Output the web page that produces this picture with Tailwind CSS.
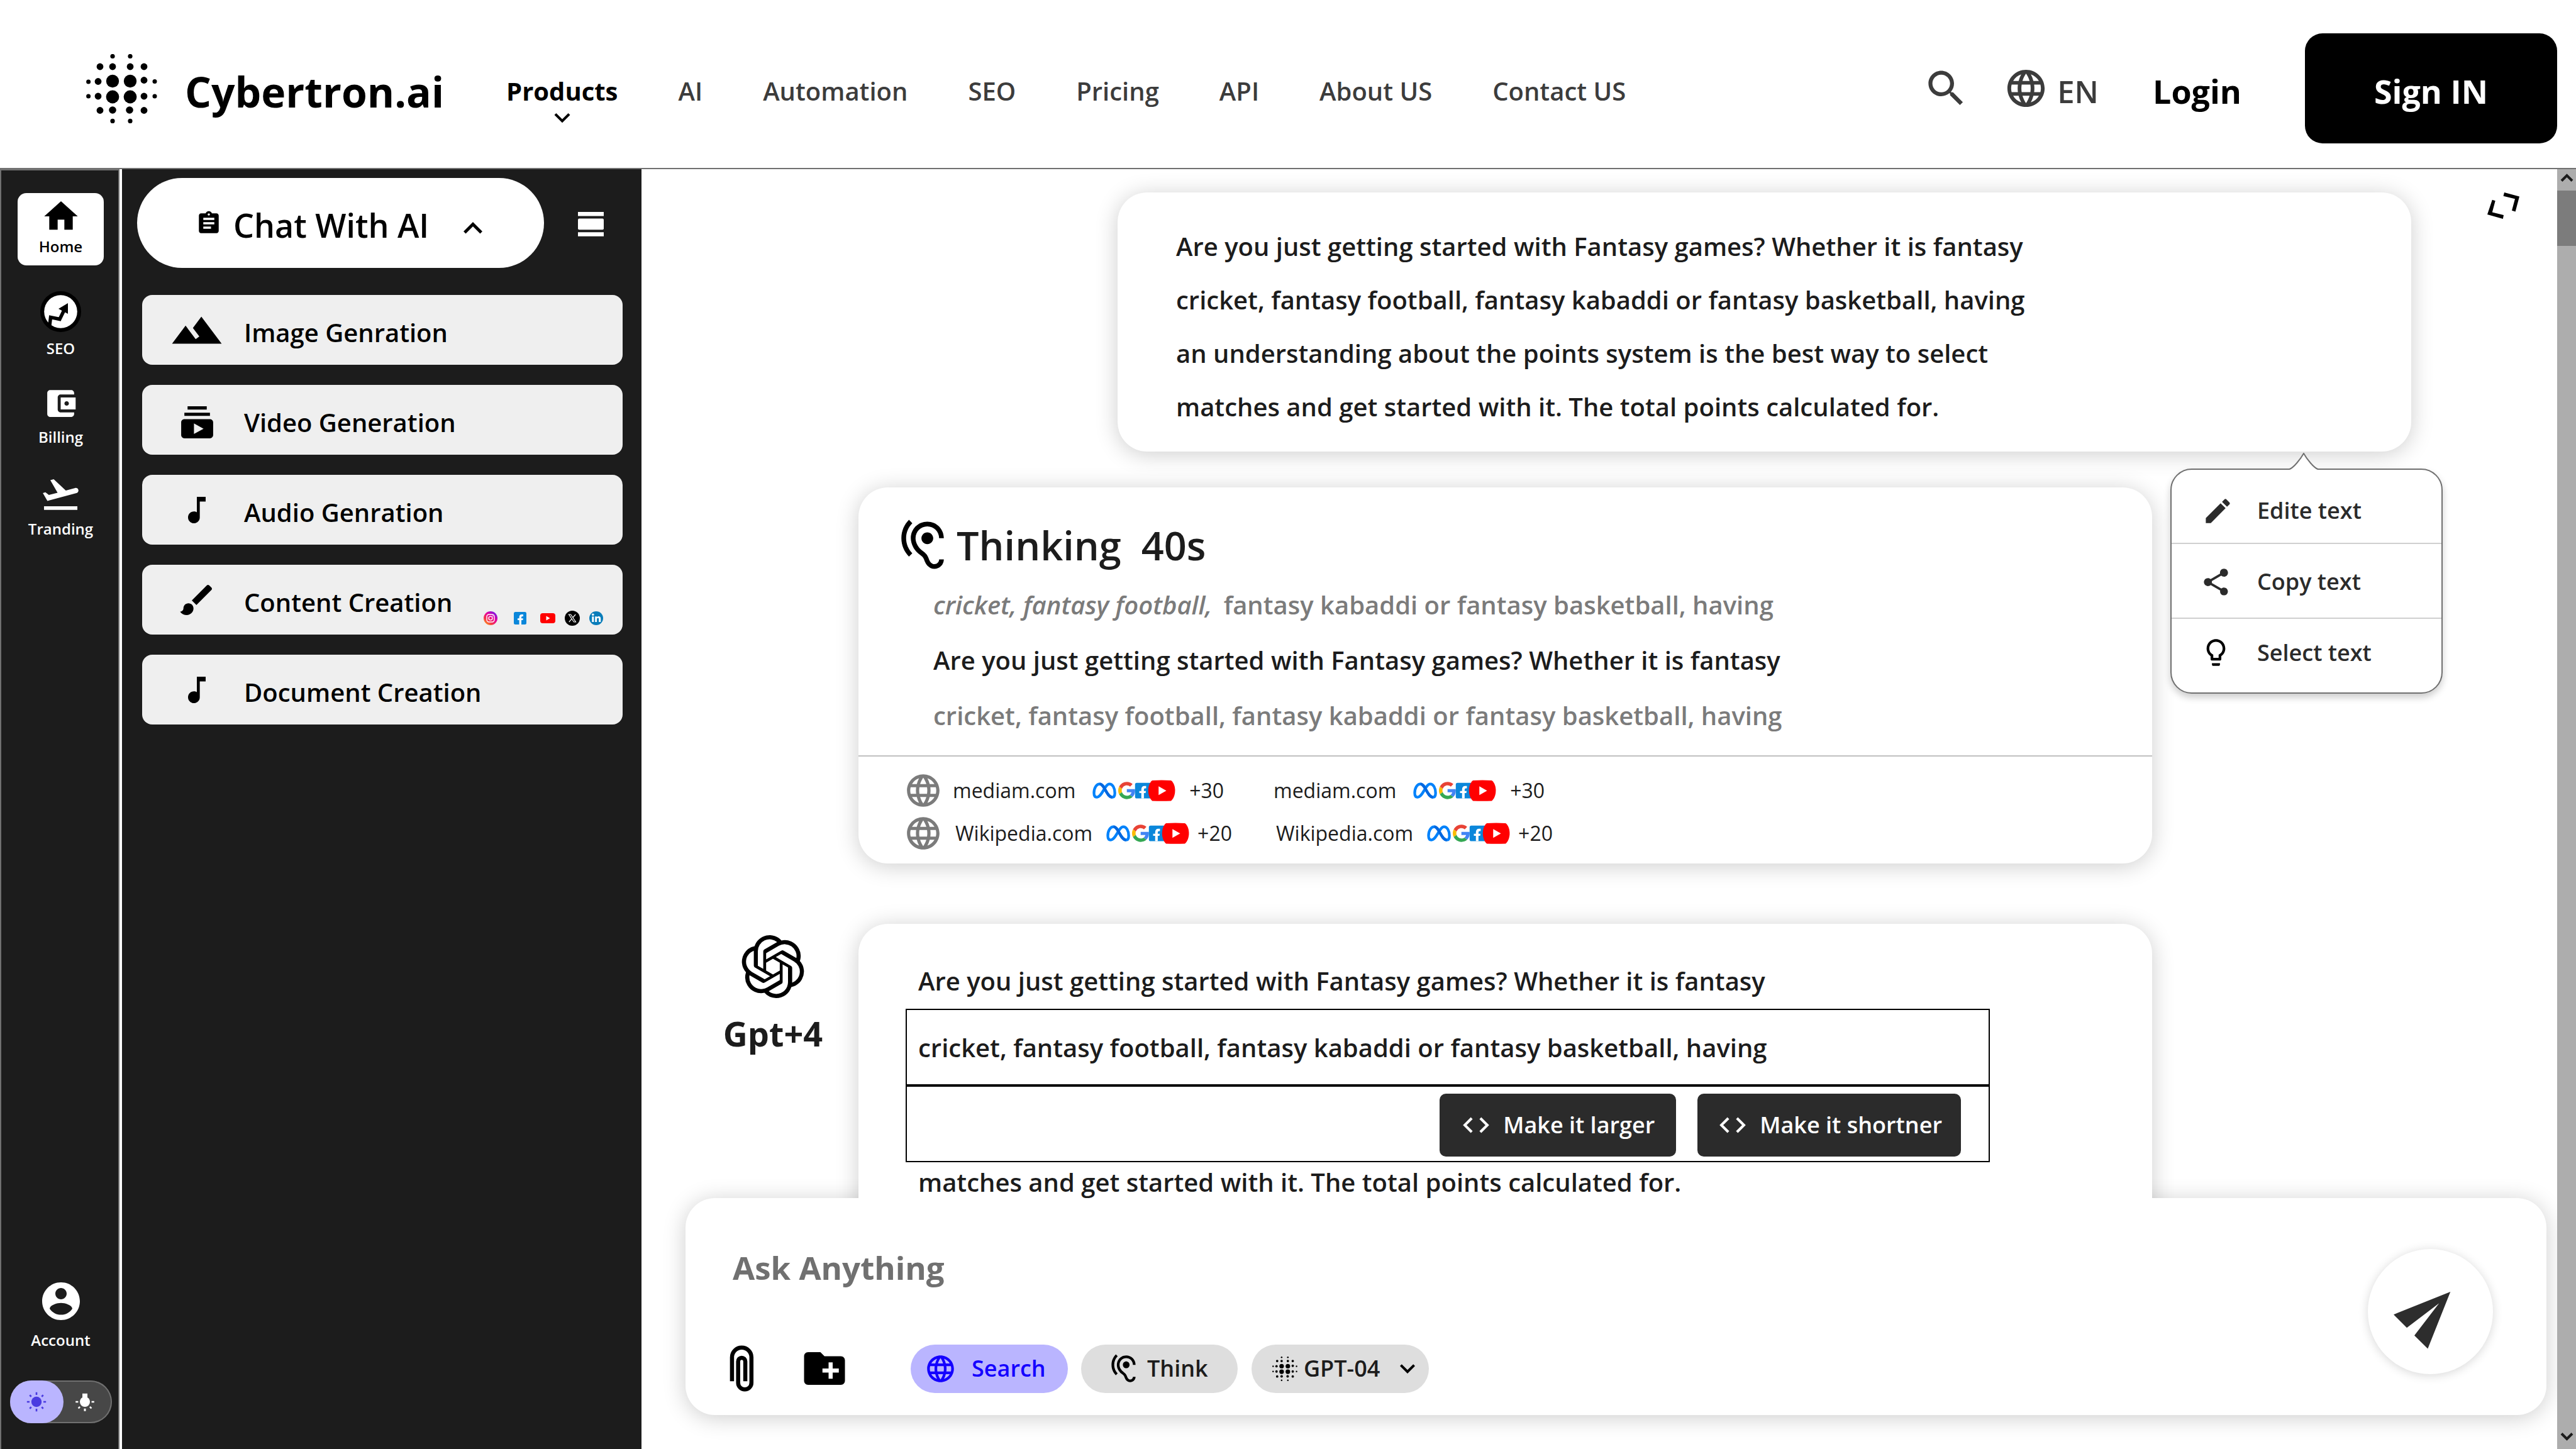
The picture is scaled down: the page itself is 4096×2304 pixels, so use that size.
<!DOCTYPE html>
<html lang="en">
<head>
<meta charset="utf-8">
<title>Cybertron.ai</title>
<script src="https://cdn.jsdelivr.net/npm/@tailwindcss/browser@4"></script>
</head>
<body class="flex h-screen flex-col overflow-hidden bg-white font-['Open_Sans','Segoe_UI',sans-serif] font-semibold text-[#1c1c1c]">

<!-- Shared icons -->
<svg class="hidden" aria-hidden="true">
  <symbol id="globe" viewBox="0 0 24 24"><path d="M11.99 2C6.47 2 2 6.48 2 12s4.47 10 9.99 10C17.52 22 22 17.52 22 12S17.52 2 11.99 2zm6.93 6h-2.95c-.32-1.25-.78-2.45-1.38-3.56 1.84.63 3.37 1.91 4.33 3.56zM12 4.04c.83 1.2 1.48 2.53 1.91 3.96h-3.82c.43-1.43 1.08-2.76 1.91-3.96zM4.26 14C4.1 13.36 4 12.69 4 12s.1-1.36.26-2h3.38c-.08.66-.14 1.32-.14 2 0 .68.06 1.34.14 2H4.26zm.82 2h2.95c.32 1.25.78 2.45 1.38 3.56-1.84-.63-3.37-1.9-4.33-3.56zm2.95-8H5.08c.96-1.66 2.49-2.93 4.33-3.56C8.81 5.55 8.35 6.75 8.03 8zM12 19.96c-.83-1.2-1.48-2.53-1.91-3.96h3.82c-.43 1.43-1.08 2.76-1.91 3.96zM14.34 14H9.66c-.09-.66-.16-1.32-.16-2 0-.68.07-1.35.16-2h4.68c.09.65.16 1.32.16 2 0 .68-.07 1.34-.16 2zm.25 5.56c.6-1.11 1.06-2.31 1.38-3.56h2.95c-.96 1.65-2.49 2.93-4.33 3.56zM16.36 14c.08-.66.14-1.32.14-2 0-.68-.06-1.34-.14-2h3.38c.16.64.26 1.31.26 2s-.1 1.36-.26 2h-3.38z"/></symbol>
  <symbol id="hearing" viewBox="0 0 24 24"><path d="M17 20c-.29 0-.56-.06-.76-.15-.71-.37-1.21-.88-1.71-2.38-.51-1.56-1.47-2.29-2.39-3-.79-.61-1.61-1.24-2.32-2.53C9.29 10.98 9 9.93 9 9c0-2.8 2.2-5 5-5s5 2.2 5 5h2c0-3.93-3.07-7-7-7S7 5.07 7 9c0 1.26.38 2.65 1.07 3.9.91 1.65 1.98 2.48 2.85 3.15.81.62 1.39 1.07 1.71 2.05.6 1.82 1.37 2.84 2.73 3.55.51.23 1.07.35 1.64.35 2.21 0 4-1.79 4-4h-2c0 1.1-.9 2-2 2zM7.64 2.64L6.22 1.22C4.23 3.21 3 5.96 3 9s1.23 5.79 3.22 7.78l1.41-1.41C6.01 13.74 5 11.49 5 9s1.01-4.74 2.64-6.36zM11.5 9c0 1.38 1.12 2.5 2.5 2.5s2.5-1.12 2.5-2.5-1.12-2.5-2.5-2.5-2.5 1.12-2.5 2.5z"/></symbol>
  <symbol id="note" viewBox="0 0 24 24"><path d="M12 3v10.55c-.59-.34-1.27-.55-2-.55-2.21 0-4 1.79-4 4s1.79 4 4 4 4-1.79 4-4V6.2h4V3h-6z"/></symbol>
  <symbol id="down" viewBox="0 0 24 24"><path d="M7.41 8.59 12 13.17l4.59-4.58L18 10l-6 6-6-6z"/></symbol>
  <symbol id="up" viewBox="0 0 24 24"><path d="M7.41 15.41 12 10.83l4.59 4.58L18 14l-6-6-6 6z"/></symbol>
  <symbol id="code" viewBox="0 0 24 24"><path d="M9.4 16.6 4.8 12l4.6-4.6L8 6l-6 6 6 6 1.4-1.4zm5.2 0 4.6-4.6-4.6-4.6L16 6l6 6-6 6-1.4-1.4z"/></symbol>
  <symbol id="dots" viewBox="0 0 113 110">
    <circle cx="42" cy="3.5" r="3.6"/><circle cx="70" cy="3.5" r="3.6"/>
    <circle cx="22" cy="20" r="5.4"/><circle cx="42" cy="20" r="5.4"/><circle cx="70" cy="20" r="5.4"/><circle cx="92" cy="20" r="5.4"/>
    <circle cx="3.6" cy="44" r="3.5"/><circle cx="19" cy="43.5" r="5.4"/><circle cx="42" cy="43" r="10.2"/><circle cx="70" cy="43" r="10.2"/><circle cx="92" cy="41.5" r="5.4"/><circle cx="109" cy="43.5" r="3.5"/>
    <circle cx="3.6" cy="67" r="3.5"/><circle cx="19" cy="67" r="5.4"/><circle cx="42" cy="68" r="10.4"/><circle cx="70" cy="68" r="10.4"/><circle cx="92" cy="67" r="5.4"/><circle cx="109" cy="67" r="3.5"/>
    <circle cx="22" cy="89.5" r="5.4"/><circle cx="42" cy="89" r="5.8"/><circle cx="69" cy="89" r="5.8"/><circle cx="92" cy="89.5" r="5.4"/>
    <circle cx="42" cy="106.4" r="3.6"/><circle cx="70" cy="106.4" r="3.6"/>
  </symbol>
  <symbol id="brands" viewBox="55 78 740 190">
    <path d="M69 195C69 150 90 115 120 115C165 115 180 232 232 232C248 232 255 220 255 195C255 150 235 115 207 115C165 115 140 232 95 232C78 232 69 220 69 195Z" fill="none" stroke="#0082fb" stroke-width="24"/>
    <path d="M120 115C165 115 180 232 232 232" fill="none" stroke="#0467df" stroke-width="24"/>
    <g transform="translate(285 96) scale(3.2)">
      <path fill="#e84335" d="M24 9.5c3.54 0 6.71 1.22 9.21 3.6l6.85-6.85C35.9 2.38 30.47 0 24 0 14.62 0 6.51 5.38 2.56 13.22l7.98 6.19C12.43 13.72 17.74 9.5 24 9.5z"/>
      <path fill="#4285f4" d="M46.98 24.55c0-1.57-.15-3.09-.38-4.55H24v9.02h12.94c-.58 2.96-2.26 5.48-4.78 7.18l7.73 6c4.51-4.18 7.09-10.36 7.09-17.65z"/>
      <path fill="#fbbc05" d="M10.53 28.59c-.48-1.45-.76-2.99-.76-4.59s.27-3.14.76-4.59l-7.98-6.19C.92 16.46 0 20.12 0 24c0 3.88.92 7.54 2.56 10.78l7.97-6.19z"/>
      <path fill="#34a853" d="M24 48c6.48 0 11.93-2.13 15.89-5.81l-7.73-6c-2.15 1.45-4.92 2.3-8.16 2.3-6.26 0-11.57-4.22-13.47-9.91l-7.98 6.19C6.51 42.62 14.62 48 24 48z"/>
    </g>
    <rect x="435" y="105" width="150" height="138" rx="16" fill="#0b87da"/>
    <path fill="#fff" d="M491 243V196H473V177H491V165Q491 133 520 133H534V154H524Q514 154 514 166V177H532L529 196H514V243Z"/>
    <path fill="#f00" d="M588 83Q672 78 756 83C804 120 804 225 756 265Q672 269 588 265C541 225 541 120 588 83Z"/>
    <path fill="#fff" d="M645 135 714 174 645 214Z"/>
  </symbol>
</svg>

<header class="flex h-[269px] shrink-0 items-center border-b-2 border-[#707070] pt-[14px] pr-[30px] pl-[137px]">
  <a href="#" class="flex items-center gap-[44px] text-[66px] leading-[88px] font-bold text-black">
    <svg class="h-[110px] w-[113px]"><use href="#dots"/></svg>
    <span class="pt-2">Cybertron.ai</span>
  </a>
  <nav class="ml-[99px] flex gap-[96px] pt-[9px] text-[40px] leading-[54px] whitespace-nowrap text-[#3c3c3c]">
    <a href="#" class="relative font-bold text-black">Products
      <svg class="absolute top-[44px] left-1/2 size-[50px] -translate-x-1/2"><use href="#down"/></svg>
    </a>
    <a href="#">AI</a>
    <a href="#">Automation</a>
    <a href="#">SEO</a>
    <a href="#">Pricing</a>
    <a href="#">API</a>
    <a href="#">About US</a>
    <a href="#">Contact US</a>
  </nav>
  <div class="ml-auto flex items-center text-[52px] leading-[68px]">
    <button type="button" aria-label="Search" class="mr-[54px]">
      <svg viewBox="0 0 24 24" class="size-[75px] fill-[#3c3c3c]"><path d="M15.5 14h-.79l-.28-.27C15.41 12.59 16 11.11 16 9.5 16 5.91 13.09 3 9.5 3S3 5.91 3 9.5 5.91 16 9.5 16c1.61 0 3.09-.59 4.23-1.57l.27.28v.79l5 4.99L20.49 19l-4.99-5zm-6 0C7.01 14 5 11.99 5 9.5S7.01 5 9.5 5 14 7.01 14 9.5 11.99 14 9.5 14z"/></svg>
    </button>
    <button type="button" class="mr-[86px] flex items-center gap-[14px] text-[49px] text-[#3c3c3c]">
      <svg class="size-[71px] fill-[#3c3c3c]"><use href="#globe"/></svg>
      <span class="pt-2">EN</span>
    </button>
    <a href="#" class="mr-[101px] pt-2 font-bold text-black">Login</a>
    <button type="button" class="h-[175px] w-[401px] rounded-[28px] bg-black pt-2 font-bold text-white">Sign IN</button>
  </div>
</header>

<div class="flex min-h-0 flex-1">

  <!-- Icon rail -->
  <aside class="flex w-[190px] shrink-0 flex-col items-center border-x-2 border-t-2 border-[#707070] bg-[#1c1c1c] pt-9 pb-[41px] pl-[3px] text-[24px] leading-8 text-white">
    <nav class="flex flex-col items-center gap-[41px]">
      <a href="#" class="flex h-[115px] w-[137px] flex-col items-center rounded-[14px] bg-white pt-[5px] text-black">
        <svg viewBox="0 0 24 24" class="size-16"><path d="M10 20v-6h4v6h5v-8h3L12 3 2 12h3v8z"/></svg>
        Home
      </a>
      <a href="#" class="flex flex-col items-center pb-[2px]">
        <svg viewBox="0 0 65 65" class="mb-[10px] size-[65px]">
          <circle cx="32.5" cy="32.5" r="32.5"/><circle cx="32.5" cy="32.5" r="26.3" fill="#fff"/>
          <path d="M15 54 16.5 41.5 31 44.5 39 28" fill="none" stroke="#000" stroke-width="5.5"/>
          <path d="M44 19 29 28 44 36Z"/>
        </svg>
        SEO
      </a>
      <a href="#" class="flex flex-col items-center">
        <svg viewBox="0 0 24 24" class="mb-[9px] size-[57px] fill-white"><path d="M21 18v1c0 1.1-.9 2-2 2H5c-1.11 0-2-.9-2-2V5c0-1.1.89-2 2-2h14c1.1 0 2 .9 2 2v1h-9c-1.11 0-2 .9-2 2v8c0 1.1.89 2 2 2h9zm-9-2h10V8H12v8zm4-2.5c-.83 0-1.5-.67-1.5-1.5s.67-1.5 1.5-1.5 1.5.67 1.5 1.5-.67 1.5-1.5 1.5z"/></svg>
        Billing
      </a>
      <a href="#" class="flex flex-col items-center">
        <svg viewBox="0 0 24 24" class="mb-[6px] size-[67px] fill-white"><path d="M2.5 19h19v2h-19zm19.57-9.36c-.21-.8-1.04-1.28-1.84-1.06L14.92 10l-6.9-6.43-1.93.51 4.14 7.17-4.97 1.33-1.97-1.54-1.45.39 1.82 3.16.77 1.33 1.6-.43 5.31-1.42 4.35-1.16L21 11.49c.81-.23 1.28-1.05 1.07-1.85z"/></svg>
        Tranding
      </a>
    </nav>
    <a href="#" class="mt-auto flex flex-col items-center gap-[10px]">
      <svg viewBox="0 0 24 24" class="size-[72px] fill-white"><path d="M12 2C6.48 2 2 6.48 2 12s4.48 10 10 10 10-4.48 10-10S17.52 2 12 2zm0 3c1.66 0 3 1.34 3 3s-1.34 3-3 3-3-1.34-3-3 1.34-3 3-3zm0 14.2c-2.5 0-4.71-1.28-6-3.22.03-1.99 4-3.08 6-3.08 1.99 0 5.97 1.09 6 3.08-1.29 1.94-3.5 3.22-6 3.22z"/></svg>
      Account
    </a>
    <label class="mt-12 flex h-[68px] w-[162px] items-center rounded-full bg-[#474747] ring-2 ring-[#707070] ring-inset">
      <input type="checkbox" class="sr-only" aria-label="Dark theme">
      <span class="flex h-[68px] w-[85px] items-center justify-center rounded-full bg-[#bab5ff]">
        <svg viewBox="-16 -16 32 32" class="size-8 fill-[#4a3be0]">
          <circle r="8.2"/>
          <path d="M-1.3-15.2h2.6v4.2h-2.6zM-1.3 11h2.6v4.2h-2.6zM-15.2-1.3h4.2v2.6h-4.2zM11-1.3h4.2v2.6h-4.2z"/>
          <path transform="rotate(45)" d="M-1.3-15.2h2.6v3.5h-2.6zM-1.3 11.7h2.6v3.5h-2.6zM-15.2-1.3h3.5v2.6h-3.5zM11.7-1.3h3.5v2.6h-3.5z"/>
        </svg>
      </span>
      <svg viewBox="-16 -16 32 32" class="ml-[18px] size-8 fill-white">
        <circle r="8"/><path d="M-4-13.2h8V-6h-8z"/>
        <path d="M-1.5 10.8h3v4h-3zM-14.8-1.3h4.2v2.6h-4.2zM10.6-1.3h4.2v2.6h-4.2z"/>
        <path transform="rotate(45)" d="M-1.3 11.2h2.6v3.5h-2.6zM11.2-1.3h3.5v2.6h-3.5z"/>
      </svg>
    </label>
  </aside>

  <!-- Tool menu -->
  <aside class="ml-1 w-[826px] shrink-0 bg-[#1c1c1c] pt-[14px] text-[40px] leading-[54px] text-black">
    <div class="mb-[43px] ml-6 flex items-center justify-between pr-[60px]">
      <button type="button" class="flex h-[143px] w-[647px] items-center rounded-full bg-white pl-[93px] text-[52px]">
        <svg viewBox="0 0 24 24" class="mr-[18px] size-[42px]"><path d="M19 3h-4.18C14.4 1.84 13.3 1 12 1c-1.3 0-2.4.84-2.82 2H5c-1.1 0-2 .9-2 2v14c0 1.1.9 2 2 2h14c1.1 0 2-.9 2-2V5c0-1.1-.9-2-2-2zm-7 0c.55 0 1 .45 1 1s-.45 1-1 1-1-.45-1-1 .45-1 1-1zm2 14H7v-2h7v2zm3-4H7v-2h10v2zm0-4H7V7h10v2z"/></svg>
        <span class="pt-[6px]">Chat With AI</span>
        <svg class="mt-4 ml-10 size-[60px]"><use href="#up"/></svg>
      </button>
      <button type="button" aria-label="Toggle menu" class="pt-[3px]">
        <svg viewBox="0 0 41 39" class="h-[39px] w-[41px] fill-white"><path d="M0 0h41v6.6H0zM0 32.2h41v6.6H0z"/><rect y="10.6" width="41" height="17.6" rx="2"/></svg>
      </button>
    </div>
    <nav class="mr-[30px] ml-8 flex flex-col gap-8">
      <a href="#" class="flex h-[111px] items-center gap-[30px] rounded-2xl bg-[#efefef] pl-[42px]">
        <span class="flex w-[90px] justify-center"><svg viewBox="0 0 24 24" class="size-[86px]"><path d="m14 6-3.75 5 2.85 3.8-1.6 1.2C9.81 13.75 7 10 7 10l-6 8h22L14 6z"/></svg></span>
        <span class="pt-2">Image Genration</span>
      </a>
      <a href="#" class="flex h-[111px] items-center gap-[30px] rounded-2xl bg-[#efefef] pl-[42px]">
        <span class="flex w-[90px] justify-center pt-2"><svg viewBox="0 0 24 24" class="size-[61px]"><path d="M20 8H4V6h16v2zm-2-6H6v2h12V2zm4 10v8c0 1.1-.9 2-2 2H4c-1.1 0-2-.9-2-2v-8c0-1.1.9-2 2-2h16c1.1 0 2 .9 2 2zm-6 4-6-3.27v6.53L16 16z"/></svg></span>
        <span class="pt-2">Video Generation</span>
      </a>
      <a href="#" class="flex h-[111px] items-center gap-[30px] rounded-2xl bg-[#efefef] pl-[42px]">
        <span class="flex w-[90px] justify-center"><svg class="size-[56px]"><use href="#note"/></svg></span>
        <span class="pt-2">Audio Genration</span>
      </a>
      <a href="#" class="relative flex h-[111px] items-center gap-[30px] rounded-2xl bg-[#efefef] pl-[42px]">
        <span class="flex w-[90px] justify-center"><svg viewBox="0 0 24 24" class="size-[64px]"><path d="M7 14c-1.66 0-3 1.34-3 3 0 1.31-1.16 2-2 2 .92 1.22 2.49 2 4 2 2.21 0 4-1.79 4-4 0-1.66-1.34-3-3-3zm13.71-9.37-1.34-1.34c-.39-.39-1.02-.39-1.41 0L9 12.25 11.75 15l8.96-8.96c.39-.39.39-1.02 0-1.41z"/></svg></span>
        <span class="pt-2">Content Creation</span>
        <span class="absolute right-[31px] bottom-[14px] flex items-center gap-[15px]">
          <svg viewBox="0 0 22 22" class="mr-[11px] size-[22px]">
            <defs><linearGradient id="insta" x1="0" y1="1" x2=".8" y2="0"><stop offset="0" stop-color="#ffc107"/><stop offset=".35" stop-color="#f4364c"/><stop offset=".65" stop-color="#e6009c"/><stop offset="1" stop-color="#6a1bf0"/></linearGradient></defs>
            <circle cx="11" cy="11" r="11" fill="url(#insta)"/>
            <rect x="5" y="5" width="12" height="12" rx="3.5" fill="none" stroke="#fff" stroke-width="1.4"/><circle cx="11" cy="11" r="2.9" fill="none" stroke="#fff" stroke-width="1.4"/><circle cx="14.5" cy="7.5" r=".8" fill="#fff"/>
          </svg>
          <svg viewBox="0 0 20 20" class="mr-[7px] size-[20px]"><rect width="20" height="20" rx="2.5" fill="#0b87da"/><path fill="#fff" d="M8.6 20v-7H6v-2.8h2.6V8.5Q8.6 4 12.5 4H15v3h-1.5Q12 7 12 8.6v1.6h2.8l-.4 2.8H12v7z"/></svg>
          <svg viewBox="0 0 24 16" class="h-4 w-6"><rect width="24" height="16" rx="4" fill="#f00"/><path fill="#fff" d="M9.5 4.5 15.5 8l-6 3.5z"/></svg>
          <svg viewBox="0 0 24 24" class="size-6"><circle cx="12" cy="12" r="12"/><path d="M6.5 6h3l8 12h-3zM17.2 6 12.8 11M6.8 18l4.6-5.3" fill="none" stroke="#fff" stroke-width="1.2"/></svg>
          <svg viewBox="0 0 22 22" class="size-[22px]"><circle cx="11" cy="11" r="11" fill="#0a7dba"/><circle cx="5.8" cy="5.3" r="1.8" fill="#fff"/><path fill="#fff" d="M4.3 8.2h3V17h-3zM9.2 8.2H12v1.3c.6-1 1.6-1.5 2.9-1.5 2.4 0 3.3 1.5 3.3 4V17h-3v-4.6c0-1.2-.3-1.9-1.4-1.9s-1.7.8-1.7 2V17H9.2z"/></svg>
        </span>
      </a>
      <a href="#" class="flex h-[111px] items-center gap-[30px] rounded-2xl bg-[#efefef] pl-[42px]">
        <span class="flex w-[90px] justify-center"><svg class="size-[56px]"><use href="#note"/></svg></span>
        <span class="pt-2">Document Creation</span>
      </a>
    </nav>
  </aside>

  <!-- Conversation -->
  <main class="relative flex min-w-0 flex-1 flex-col overflow-hidden">
    <section class="relative z-10 min-h-0 flex-1 overflow-hidden pt-[37px] text-[40px]">
      <article class="mr-[232px] ml-[757px] rounded-[47px] bg-white pt-[43px] pb-[29px] pl-[93px] leading-[85px] shadow-[0_4px_36px_rgba(0,0,0,0.2)]">
        <p>Are you just getting started with Fantasy games? Whether it is fantasy<br>cricket, fantasy football, fantasy kabaddi or fantasy basketball, having<br>an understanding about the points system is the best way to select<br>matches and get started with it. The total points calculated for.</p>
      </article>

      <article class="mt-[57px] mr-[644px] ml-[345px] rounded-[47px] bg-white pt-[47px] shadow-[0_4px_36px_rgba(0,0,0,0.2)]">
        <h2 class="flex h-[90px] items-center pl-[57px] text-[63px] leading-[84px]">
          <svg class="mr-[9px] size-[90px] fill-black"><use href="#hearing"/></svg>
          <span class="mr-[32px]">Thinking</span><span>40s</span>
        </h2>
        <div class="mt-[6px] pb-[19px] pl-[119px] leading-[88px]">
          <p class="text-[#7b7b7b]"><em class="pr-2">cricket, fantasy football, </em>fantasy kabaddi or fantasy basketball, having</p>
          <p>Are you just getting started with Fantasy games? Whether it is fantasy</p>
          <p class="text-[#7b7b7b]">cricket, fantasy football, fantasy kabaddi or fantasy basketball, having</p>
        </div>
        <ul class="border-t-2 border-[#c0c0c0] pt-5 pb-[14px] pl-[72px] text-[32px] leading-[44px] font-normal">
          <li class="flex h-[68px] items-center">
            <svg class="mr-[16px] size-[62px] fill-[#7b7b7b]"><use href="#globe"/></svg>
            <a href="#" class="flex w-[510px] items-center">mediam.com<svg class="mr-[22px] ml-[27px] h-[34px] w-[132px]"><use href="#brands"/></svg>+30</a>
            <a href="#" class="flex items-center">mediam.com<svg class="mr-[22px] ml-[27px] h-[34px] w-[132px]"><use href="#brands"/></svg>+30</a>
          </li>
          <li class="flex h-[68px] items-center">
            <svg class="mr-[20px] size-[62px] fill-[#7b7b7b]"><use href="#globe"/></svg>
            <a href="#" class="flex w-[510px] items-center">Wikipedia.com<svg class="mr-[13px] ml-[22px] h-[34px] w-[132px]"><use href="#brands"/></svg>+20</a>
            <a href="#" class="flex items-center">Wikipedia.com<svg class="mr-[13px] ml-[22px] h-[34px] w-[132px]"><use href="#brands"/></svg>+20</a>
          </li>
        </ul>
      </article>

      <div class="mt-24 mr-[644px] flex">
        <div class="flex w-[345px] shrink-0 flex-col items-center pt-[18px] pl-[73px] text-[54px] leading-[72px] font-bold">
          <svg viewBox="0 0 24 24" class="mb-5 size-[100px] fill-black"><path d="M22.2819 9.8211a5.9847 5.9847 0 0 0-.5157-4.9108 6.0462 6.0462 0 0 0-6.5098-2.9A6.0651 6.0651 0 0 0 4.9807 4.1818a5.9847 5.9847 0 0 0-3.9977 2.9 6.0462 6.0462 0 0 0 .7427 7.0966 5.98 5.98 0 0 0 .511 4.9107 6.051 6.051 0 0 0 6.5146 2.9001A5.9847 5.9847 0 0 0 13.2599 24a6.0557 6.0557 0 0 0 5.7718-4.2058 5.9894 5.9894 0 0 0 3.9977-2.9001 6.0557 6.0557 0 0 0-.7475-7.0729zm-9.022 12.6081a4.4755 4.4755 0 0 1-2.8764-1.0408l.1419-.0804 4.7783-2.7582a.7948.7948 0 0 0 .3927-.6813v-6.7369l2.02 1.1686a.071.071 0 0 1 .038.052v5.5826a4.504 4.504 0 0 1-4.4945 4.4944zm-9.6607-4.1254a4.4708 4.4708 0 0 1-.5346-3.0137l.142.0852 4.783 2.7582a.7712.7712 0 0 0 .7806 0l5.8428-3.3685v2.3324a.0804.0804 0 0 1-.0332.0615L9.74 19.9502a4.4992 4.4992 0 0 1-6.1408-1.6464zM2.3408 7.8956a4.485 4.485 0 0 1 2.3655-1.9728V11.6a.7664.7664 0 0 0 .3879.6765l5.8144 3.3543-2.0201 1.1685a.0757.0757 0 0 1-.071 0l-4.8303-2.7865A4.504 4.504 0 0 1 2.3408 7.872zm16.5963 3.8558L13.1038 8.364 15.1192 7.2a.0757.0757 0 0 1 .071 0l4.8303 2.7913a4.4944 4.4944 0 0 1-.6765 8.1042v-5.6772a.79.79 0 0 0-.407-.667zm2.0107-3.0231l-.142-.0852-4.7735-2.7818a.7759.7759 0 0 0-.7854 0L9.409 9.2297V6.8974a.0662.0662 0 0 1 .0284-.0615l4.8303-2.7866a4.4992 4.4992 0 0 1 6.6802 4.66zM8.3065 12.863l-2.02-1.1638a.0804.0804 0 0 1-.038-.0567V6.0742a4.4992 4.4992 0 0 1 7.3757-3.4537l-.142.0805L8.704 5.459a.7948.7948 0 0 0-.3927.6813zm1.0976-2.3654l2.602-1.4998 2.6069 1.4998v2.9994l-2.5974 1.4997-2.6067-1.4997Z"/></svg>
          Gpt+4
        </div>
        <article class="min-w-0 flex-1 rounded-[47px] bg-white pt-[61px] pb-[120px] leading-[60px] shadow-[0_4px_36px_rgba(0,0,0,0.2)]">
          <p class="pl-[95px]">Are you just getting started with Fantasy games? Whether it is fantasy</p>
          <div class="mt-[14px] mr-[258px] ml-[75px]">
            <p class="flex h-[122px] items-center border-2 border-black pt-[2px] pl-[18px]">cricket, fantasy football, fantasy kabaddi or fantasy basketball, having</p>
            <div class="flex h-[122px] items-center justify-end gap-[34px] border-2 border-black pt-[4px] pr-[44px] text-[36px] text-white">
              <button type="button" class="flex h-[100px] items-center gap-[18px] rounded-[10px] bg-[#2b2b2b] pr-[34px] pl-[33px]"><svg class="size-[50px] fill-white"><use href="#code"/></svg>Make it larger</button>
              <button type="button" class="flex h-[100px] items-center gap-[18px] rounded-[10px] bg-[#2b2b2b] pr-[30px] pl-[31px]"><svg class="size-[50px] fill-white"><use href="#code"/></svg>Make it shortner</button>
            </div>
          </div>
          <p class="mt-[2px] pl-[95px]">matches and get started with it. The total points calculated for.</p>
        </article>
      </div>
    </section>

    <button type="button" aria-label="Expand" class="absolute top-[37px] right-[60px] z-20">
      <svg viewBox="0 0 51 42" class="h-[42px] w-[51px]"><path d="M27 0 51 6.5 44.6 30.5 39 28.8 44 10.3 25.5 5.7ZM7.8 11.7 12.7 13.3 7.8 31.6 26 36 24.8 42 0 35Z"/></svg>
    </button>

    <!-- Message menu -->
    <div class="absolute top-[476px] right-[182px] z-20 w-[433px] rounded-[34px] border-2 border-[#707070] bg-white text-[36px] text-[#2b2b2b] shadow-[0_6px_12px_rgba(0,0,0,0.2)]">
      <svg viewBox="0 0 46 29" class="absolute -top-[27px] left-[187px] h-[29px] w-[46px]"><path d="M0 27C6 26 20 5 23 1C26 5 40 26 46 27V29H0Z" fill="#fff"/><path d="M0 26C6 25 18 10 23 1C28 10 40 25 46 26" fill="none" stroke="#707070" stroke-width="2"/></svg>
      <button type="button" class="flex h-[118px] w-full items-center gap-[37px] border-b-2 border-[#cfcfcf] pt-[14px] pl-[48px]"><svg viewBox="0 0 24 24" class="size-[51px] fill-[#2b2b2b]"><path d="M3 17.25V21h3.75L17.81 9.94l-3.75-3.75L3 17.25zM20.71 7.04c.39-.39.39-1.02 0-1.41l-2.34-2.34c-.39-.39-1.02-.39-1.41 0l-1.83 1.83 3.75 3.75 1.83-1.83z"/></svg>Edite text</button>
      <button type="button" class="flex h-[119px] w-full items-center gap-[40px] border-b-2 border-[#cfcfcf] pt-[3px] pl-[45px]"><svg viewBox="0 0 24 24" class="size-[51px] fill-[#2b2b2b]"><path d="M18 16.08c-.76 0-1.44.3-1.96.77L8.91 12.7c.05-.23.09-.46.09-.7s-.04-.47-.09-.7l7.05-4.11c.54.5 1.25.81 2.04.81 1.66 0 3-1.34 3-3s-1.34-3-3-3-3 1.34-3 3c0 .24.04.47.09.7L8.04 9.81C7.5 9.31 6.79 9 6 9c-1.66 0-3 1.34-3 3s1.34 3 3 3c.79 0 1.5-.31 2.04-.81l7.12 4.16c-.05.21-.08.43-.08.65 0 1.61 1.31 2.92 2.92 2.92 1.61 0 2.92-1.31 2.92-2.92s-1.31-2.92-2.92-2.92z"/></svg>Copy text</button>
      <button type="button" class="flex h-[117px] w-full items-center gap-[40px] pb-[10px] pl-[45px]"><svg viewBox="0 0 24 24" class="size-[51px] fill-black"><path d="M9 21c0 .55.45 1 1 1h4c.55 0 1-.45 1-1v-1H9v1zm3-19C8.14 2 5 5.14 5 9c0 2.38 1.19 4.47 3 5.74V17c0 .55.45 1 1 1h6c.55 0 1-.45 1-1v-2.26c1.81-1.27 3-3.36 3-5.74 0-3.86-3.14-7-7-7zm2.85 11.1-.85.6V16h-4v-2.3l-.85-.6C7.8 12.16 7 10.63 7 9c0-2.76 2.24-5 5-5s5 2.24 5 5c0 1.63-.8 3.16-2.15 4.1z"/></svg>Select text</button>
    </div>

    <!-- Composer -->
    <form class="mr-[17px] mb-[54px] ml-[70px] flex h-[345px] shrink-0 rounded-[47px] bg-white shadow-[0_4px_36px_rgba(0,0,0,0.2)]">
      <div class="flex-1 pt-[75px]">
        <input type="text" aria-label="Message" placeholder="Ask Anything" class="block h-[70px] w-full pl-[75px] text-[51px] font-bold placeholder:text-[#707070] placeholder:opacity-100">
        <div class="mt-[87px] flex h-[78px] items-center pl-[52px] text-[36px] leading-[48px]">
          <button type="button" aria-label="Attach file" class="mr-[52px]"><svg viewBox="0 0 24 24" class="size-[78px] rotate-180"><path d="M16.5 6v11.5c0 2.21-1.79 4-4 4s-4-1.79-4-4V5c0-1.38 1.12-2.5 2.5-2.5s2.5 1.12 2.5 2.5v10.5c0 .55-.45 1-1 1s-1-.45-1-1V6H10v9.5c0 1.38 1.12 2.5 2.5 2.5s2.5-1.12 2.5-2.5V5c0-2.21-1.79-4-4-4S7 2.79 7 5v12.5c0 3.04 2.46 5.5 5.5 5.5s5.5-2.46 5.5-5.5V6h-1.5z" stroke="#000" stroke-width=".5"/></svg></button>
          <button type="button" aria-label="New folder" class="mr-[98px]"><svg viewBox="0 0 24 24" class="size-[78px]"><path d="M20 6h-8l-2-2H4c-1.11 0-1.99.89-1.99 2L2 18c0 1.11.89 2 2 2h16c1.11 0 2-.89 2-2V8c0-1.11-.89-2-2-2zm-1 8h-3v3h-2v-3h-3v-2h3V9h2v3h3v2z"/></svg></button>
          <button type="button" class="mr-[21px] flex h-[77px] w-[250px] items-center gap-6 rounded-full bg-[#bab5ff] pl-[22px] text-[#1400ff]"><svg class="size-[51px] fill-[#1400ff]"><use href="#globe"/></svg>Search</button>
          <button type="button" class="mr-[22px] flex h-[77px] w-[249px] items-center gap-3 rounded-full bg-[#dedede] pl-[42px]"><svg class="size-[51px] fill-black"><use href="#hearing"/></svg>Think</button>
          <div class="relative flex h-[77px] w-[282px] items-center rounded-full bg-[#dedede] pl-[33px]">
            <svg class="mr-[10px] h-[39px] w-[40px]"><use href="#dots"/></svg>
            <select aria-label="Model" class="w-[190px] appearance-none"><option>GPT-04</option></select>
            <svg class="pointer-events-none absolute right-[10px] size-[48px]"><use href="#down"/></svg>
          </div>
        </div>
      </div>
      <button type="submit" aria-label="Send" class="mt-[81px] mr-[85px] flex size-[199px] shrink-0 rounded-full bg-white pt-[68px] pl-[41px] shadow-[0_2px_16px_rgba(0,0,0,0.16)]">
        <svg viewBox="0 0 91 91" class="size-[91px] fill-[#2d2d2d]"><path d="M90.3 0 0 36.2 21 57.3 72.3 18.3 33 69.5 54.3 90.4Z"/></svg>
      </button>
    </form>
  </main>

  <!-- Scroll track -->
  <div class="flex w-[30px] shrink-0 flex-col items-center bg-[#adadad]">
    <svg viewBox="0 0 21 13" class="mt-[7px] h-[13px] w-[21px]"><path d="M2 11.5 10.5 3 19 11.5" fill="none" stroke="#1c1c1c" stroke-width="4"/></svg>
    <div class="mt-[14px] h-[88px] w-full bg-[#7c7c7c]"></div>
    <svg viewBox="0 0 21 13" class="mt-auto mb-[13px] h-[13px] w-[21px]"><path d="M2 1.5 10.5 10 19 1.5" fill="none" stroke="#1c1c1c" stroke-width="4"/></svg>
  </div>
</div>
</body>
</html>
